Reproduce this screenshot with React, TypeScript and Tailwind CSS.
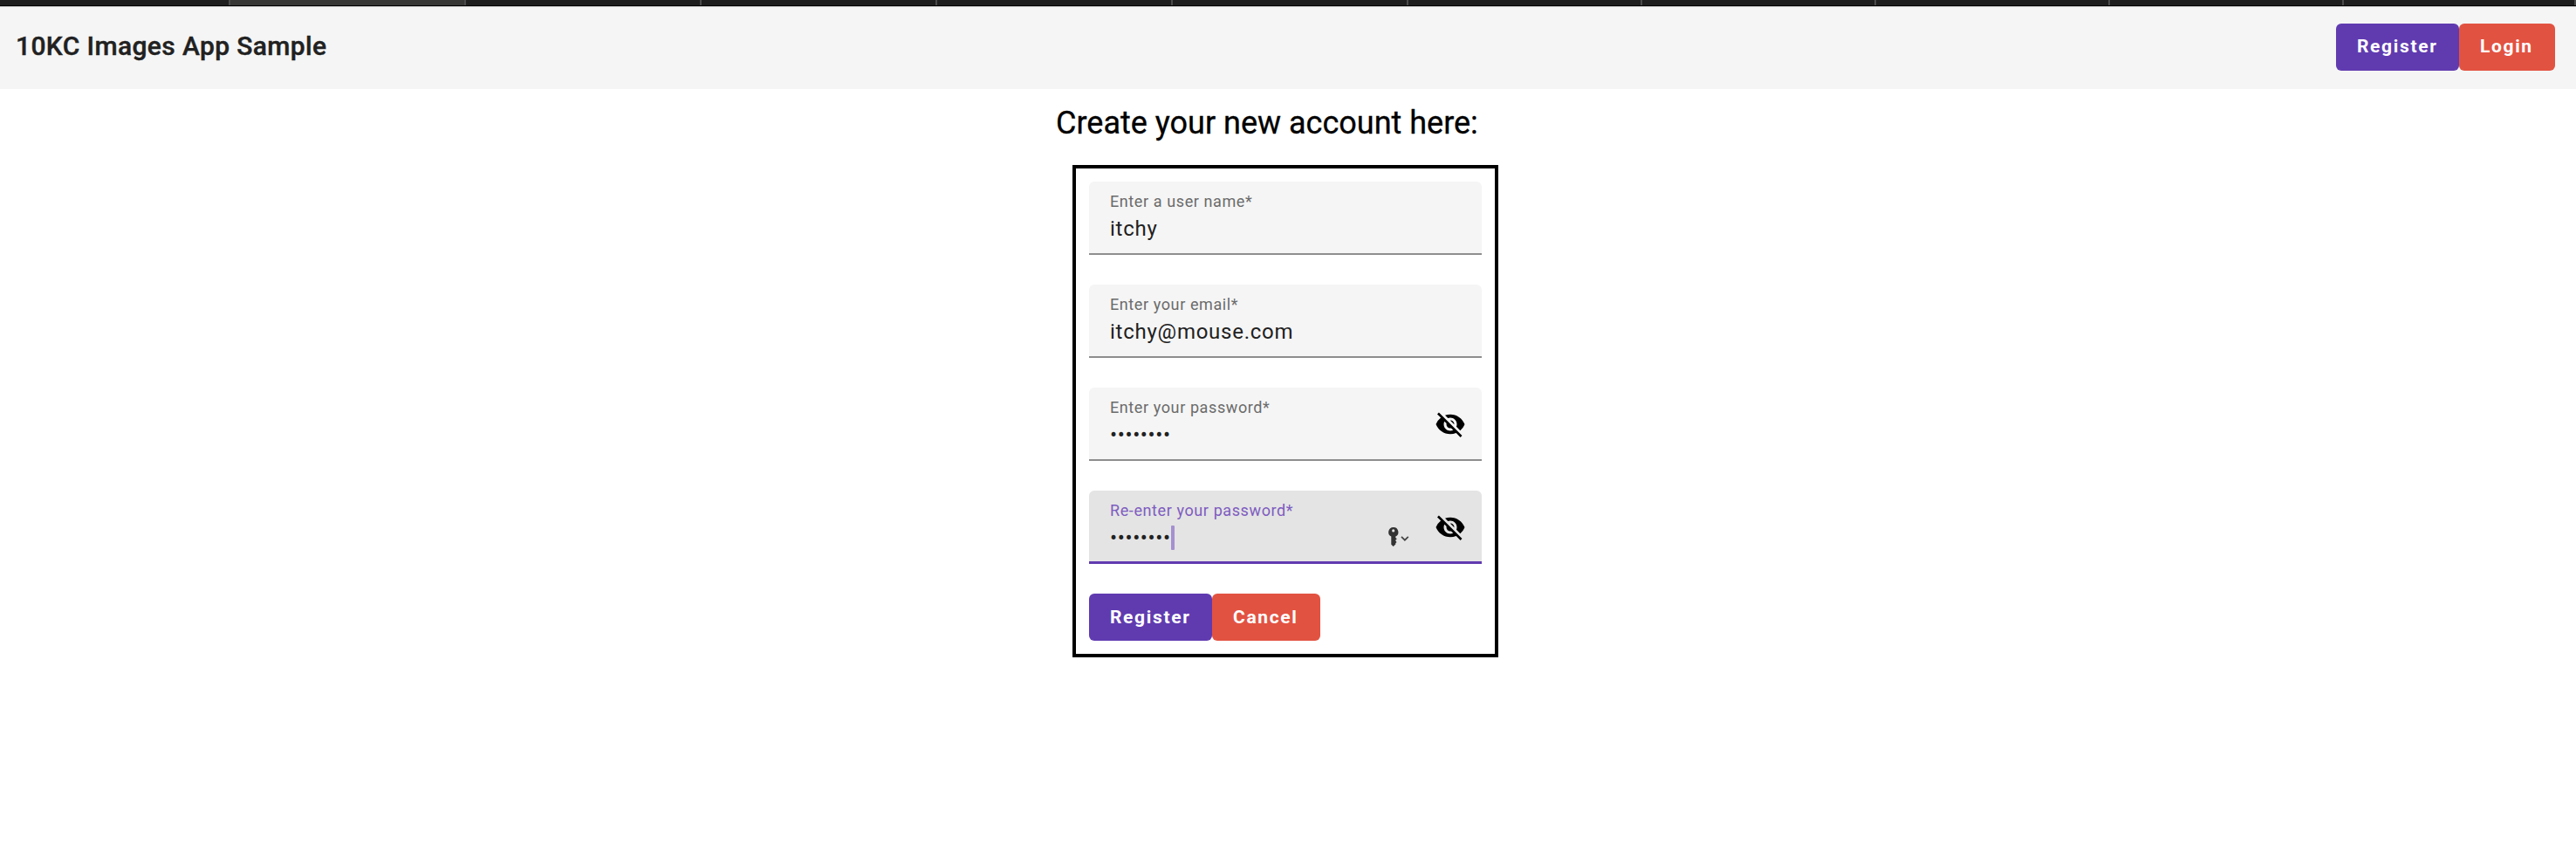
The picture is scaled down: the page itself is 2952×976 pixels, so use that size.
import { MdVisibilityOff } from "react-icons/md";

const tabs = [
  { width: "w-[262px]", active: false },
  { width: "w-[270px]", active: true },
  { width: "w-[270px]", active: false },
  { width: "w-[270px]", active: false },
  { width: "w-[270px]", active: false },
  { width: "w-[270px]", active: false },
  { width: "w-[268px]", active: false },
  { width: "w-[268px]", active: false },
  { width: "w-[268px]", active: false },
  { width: "w-[268px]", active: false },
  { width: "w-[266px]", active: false },
];

function TabStrip() {
  return (
    <div className="flex h-2 w-full overflow-hidden border-b border-[#b4b4b4] bg-black pb-px">
      {tabs.map((tab, i) => (
        <div
          key={i}
          className={`${tab.width} h-1.5 shrink-0 ${i > 0 ? "border-l-2 border-[#4a4a4a]" : ""} ${
            tab.active ? "bg-[#373735]" : "bg-[#1e1e1e]"
          }`}
        />
      ))}
      <div className="h-1.5 w-0.5 shrink-0 bg-[#4a4a4a]" />
    </div>
  );
}

type ButtonProps = { label: string; tone: "primary" | "warn"; size: string };

function Button({ label, tone, size }: ButtonProps) {
  return (
    <button
      className={`${size} h-[54px] rounded-md pl-6 text-left text-[21px] font-bold tracking-[1.65px] whitespace-nowrap text-white ${
        tone === "primary" ? "bg-[#603bb0]" : "bg-[#e25241]"
      }`}
    >
      {label}
    </button>
  );
}

function KeyIcon() {
  return (
    <svg className="h-[22px] w-[24px]" viewBox="0 0 24 22" fill="none">
      <path
        fillRule="evenodd"
        clipRule="evenodd"
        fill="#333"
        d="M5.7 0a5.6 5.6 0 0 0-2.4 10.6v9.2L5.7 22l2.6-2.4v-1.4l1.2-1.3-1.2-1.3v-.8l1.5-1.5-1.5-1.4v-1.3A5.6 5.6 0 0 0 5.7 0Zm0 2.3a1.6 1.6 0 1 1 0 3.2 1.6 1.6 0 0 1 0-3.2Z"
      />
      <path d="M15 10.8l3.9 3.9 3.9-3.9" stroke="#444" strokeWidth="1.7" />
    </svg>
  );
}

type FieldProps = { label: string; value: string; secret?: boolean; focused?: boolean };

function Field({ label, value, secret, focused }: FieldProps) {
  return (
    <div
      className={`flex h-[84px] items-center rounded-t-md pr-[18px] pl-6 ${
        focused ? "border-b-3 border-[#603bb0] bg-[#e4e4e4]" : "border-b-2 border-[#8e8e8e] bg-[#f5f5f5]"
      }`}
    >
      <div className="flex h-full grow flex-col pt-[11px]">
        <span
          className={`h-6 text-lg leading-6 tracking-[0.6px] whitespace-nowrap ${
            focused ? "text-[#7e5cc0]" : "text-[#6b6b6b]"
          }`}
        >
          {label}*
        </span>
        <div className="mt-px flex h-9 items-center text-2xl leading-9 text-[#212121]">
          <span className={secret ? "tracking-[0.62px]" : "tracking-[0.75px]"}>{value}</span>
          {focused && <span className="-mt-px h-7 w-1 rounded-[1px] bg-[#a491cf]" />}
        </div>
      </div>
      {focused && (
        <div className="mt-6 mr-[29px]">
          <KeyIcon />
        </div>
      )}
      {secret && <MdVisibilityOff className={`size-9 text-black ${focused ? "mt-[3px]" : "mt-0.5"}`} />}
    </div>
  );
}

export default function App() {
  return (
    <div className="flex h-[976px] w-[2952px] flex-col bg-white font-['Roboto',sans-serif]">
      <TabStrip />
      <header className="flex h-[94px] items-center justify-between bg-[#f5f5f5] pr-6 pb-0.5 pl-[18px]">
        <h1 className="pb-0.5 text-[30px] leading-[48px] font-medium tracking-[0.375px] text-[#212121] [-webkit-text-stroke:0.4px_#212121]">
          10KC Images App Sample
        </h1>
        <nav className="flex">
          <Button label="Register" tone="primary" size="w-[141px] leading-[52px] pb-0.5" />
          <Button label="Login" tone="warn" size="w-[110px] leading-[52px] pb-0.5" />
        </nav>
      </header>
      <main className="flex flex-col items-start">
        <h2 className="mt-[15px] ml-[1210px] text-[36px] leading-[48px] text-black [-webkit-text-stroke:0.3px_black]">
          Create your new account here:
        </h2>
        <form className="mt-6 ml-[1229px] flex w-[488px] flex-col gap-[34px] border-4 border-black p-[15px]">
          <Field label="Enter a user name" value="itchy" />
          <Field label="Enter your email" value="itchy@mouse.com" />
          <Field label="Enter your password" value="••••••••" secret />
          <Field label="Re-enter your password" value="••••••••" secret focused />
          <div className="flex">
            <Button label="Register" tone="primary" size="w-[141px] leading-[54px]" />
            <Button label="Cancel" tone="warn" size="w-[124px] leading-[54px]" />
          </div>
        </form>
      </main>
    </div>
  );
}
